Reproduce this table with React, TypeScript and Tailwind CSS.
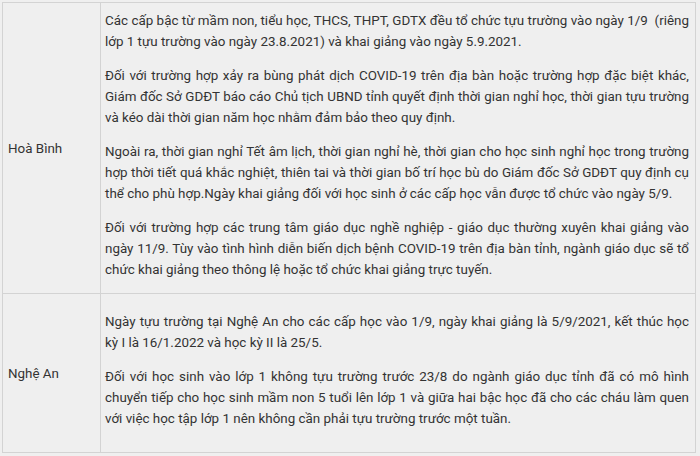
const hoaBinh: string[][] = [
  [
    'Các cấp bậc từ mầm non, tiểu học, THCS, THPT, GDTX đều tổ chức tựu trường vào ngày 1/9\u00a0 (riêng',
    'lớp 1 tựu trường vào ngày 23.8.2021) và khai giảng vào ngày 5.9.2021.',
  ],
  [
    'Đối với trường hợp xảy ra bùng phát dịch COVID-19 trên địa bàn hoặc trường hợp đặc biệt khác,',
    'Giám đốc Sở GDĐT báo cáo Chủ tịch UBND tỉnh quyết định thời gian nghỉ học, thời gian tựu trường',
    'và kéo dài thời gian năm học nhằm đảm bảo theo quy định.',
  ],
  [
    'Ngoài ra, thời gian nghỉ Tết âm lịch, thời gian nghỉ hè, thời gian cho học sinh nghỉ học trong trường',
    'hợp thời tiết quá khắc nghiệt, thiên tai và thời gian bố trí học bù do Giám đốc Sở GDĐT quy định cụ',
    'thể cho phù hợp.Ngày khai giảng đối với học sinh ở các cấp học vẫn được tổ chức vào ngày 5/9.',
  ],
  [
    'Đối với trường hợp các trung tâm giáo dục nghề nghiệp - giáo dục thường xuyên khai giảng vào',
    'ngày 11/9. Tùy vào tình hình diễn biến dịch bệnh COVID-19 trên địa bàn tỉnh, ngành giáo dục sẽ tổ',
    'chức khai giảng theo thông lệ hoặc tổ chức khai giảng trực tuyến.',
  ],
];

const ngheAn: string[][] = [
  [
    'Ngày tựu trường tại Nghệ An cho các cấp học vào 1/9, ngày khai giảng là 5/9/2021, kết thúc học',
    'kỳ I là 16/1.2022 và học kỳ II là 25/5.',
  ],
  [
    'Đối với học sinh vào lớp 1 không tựu trường trước 23/8 do ngành giáo dục tỉnh đã có mô hình',
    'chuyển tiếp cho học sinh mầm non 5 tuổi lên lớp 1 và giữa hai bậc học đã cho các cháu làm quen',
    'với việc học tập lớp 1 nên không cần phải tựu trường trước một tuần.',
  ],
];

// each paragraph is laid out line by line so the wraps match the screenshot
function Paragraph({ lines }: { lines: string[] }) {
  return (
    <div className="mb-[13px]">
      {lines.map((line, i) => (
        <div
          key={i}
          className={i < lines.length - 1 ? 'text-justify [text-align-last:justify]' : 'text-left'}
        >
          {line}
        </div>
      ))}
    </div>
  );
}

function Row({ province, paras, last }: { province: string; paras: string[][]; last?: boolean }) {
  return (
    <div className={`flex ${last ? 'min-h-[158px]' : 'border-b border-[#d3d3d3]'}`}>
      <div className="w-[98px] shrink-0 border-r border-[#d3d3d3] pl-[5px] flex items-center">
        {province}
      </div>
      <div className="flex-1 pl-[4px] pr-[6px] pt-[7px] flex flex-col justify-center">
        {paras.map((p, i) => (
          <Paragraph key={i} lines={p} />
        ))}
      </div>
    </div>
  );
}

export default function App() {
  return (
    <div className="w-[700px] h-[456px] overflow-hidden bg-[#efefef] pt-[2px] pl-[2px]">
      <div
        className="w-[694px] border border-[#d3d3d3] text-[#333333] text-[13.4px] leading-[21px]"
        style={{ fontFamily: 'Roboto, "Noto Sans", sans-serif' }}
      >
        <Row province="Hoà Bình" paras={hoaBinh} />
        <Row province="Nghệ An" paras={ngheAn} last />
      </div>
    </div>
  );
}
